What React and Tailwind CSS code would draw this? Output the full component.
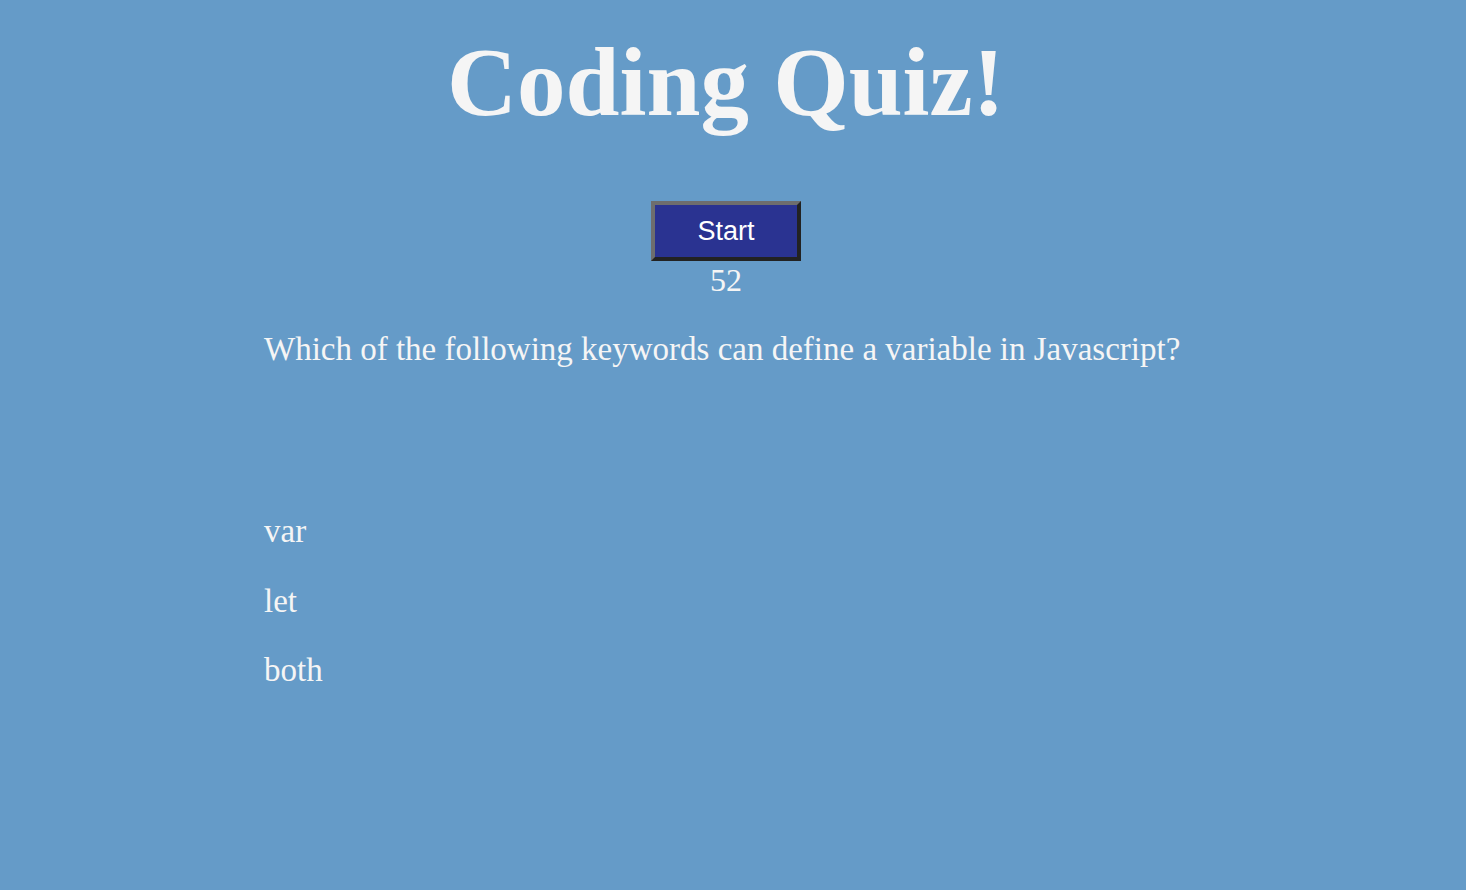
export default function App() {
  const answers = ["var", "let", "both"]

  return (
    <div className="min-h-[890px] bg-[#659bc8] text-[#f5f5f5] font-['Liberation_Serif',serif]">
      <div className="pr-[14px]">
        <h1 className="pt-[23px] text-center text-[97px] font-bold leading-[120px]">
          Coding Quiz!
        </h1>

        <div className="mt-[58px] flex flex-col items-center">
          <button className="h-[60px] w-[150px] border-4 border-t-[#6e6e6e] border-l-[#6e6e6e] border-b-[#222] border-r-[#222] bg-[#2a3391] font-['Liberation_Sans',sans-serif] text-[27px] text-white">
            Start
          </button>
          <p className="text-[32px] leading-[38px]">52</p>
        </div>
      </div>

      <div className="ml-[264px]">
        <p className="mt-[30px] text-[33px] leading-[40px]">
          Which of the following keywords can define a variable in Javascript?
        </p>

        <ul className="mt-[142px] flex flex-col gap-[29.5px]">
          {answers.map((a) => (
            <li key={a} className="text-[33px] leading-[40px]">
              {a}
            </li>
          ))}
        </ul>
      </div>
    </div>
  )
}
